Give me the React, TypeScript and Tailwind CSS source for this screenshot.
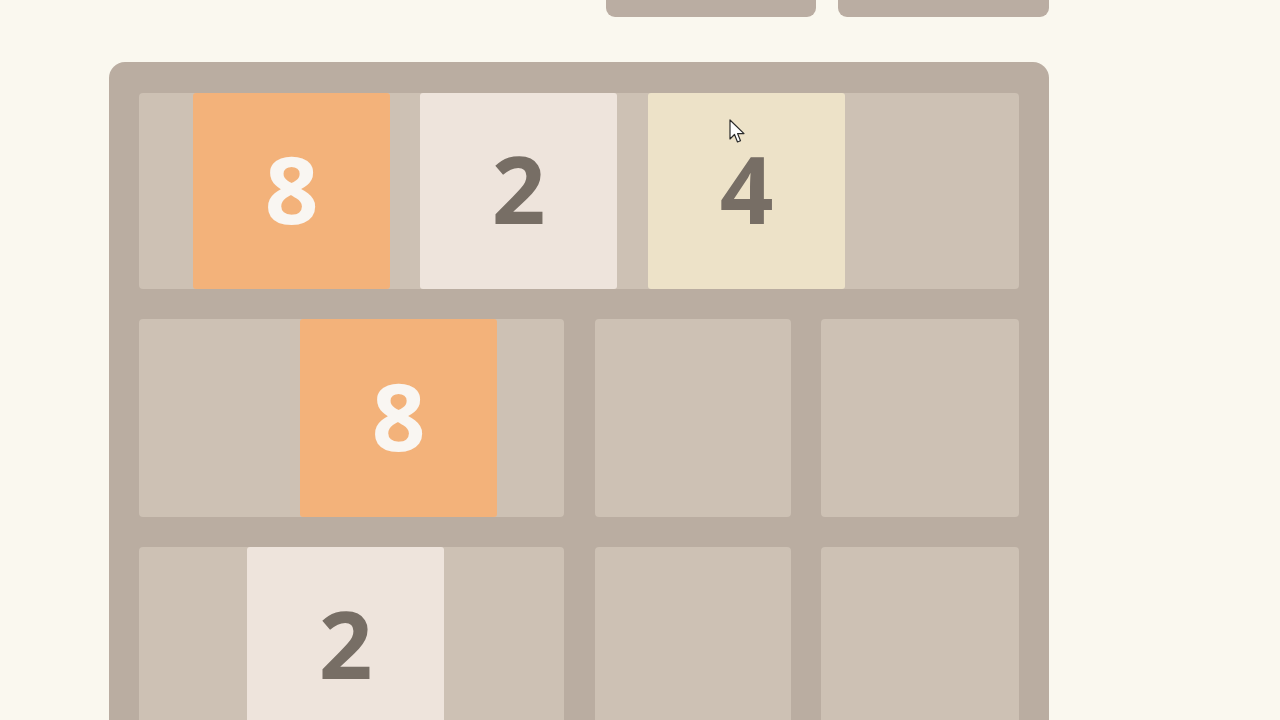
import React from "react";

const font = { fontFamily: '"Open Sans", "Liberation Sans", sans-serif' };

function Tile({ value, cls }: { value: string; cls: string }) {
  return (
    <div
      className={`flex h-full w-[197px] shrink-0 items-center justify-center rounded-[3px] pb-[6px] text-[94px] font-bold leading-none ${cls}`}
      style={font}
    >
      {value}
    </div>
  );
}

function Cell({ w }: { w: string }) {
  return <div className={`h-full shrink-0 rounded-[4px] bg-[#cdc1b4] ${w}`} />;
}

export default function App() {
  return (
    <div className="min-h-[720px] w-full overflow-hidden bg-[#faf8ef]">
      <div className="ml-[109px] w-[940px]">
        <div className="flex justify-end gap-[22px]">
          <div className="h-[17px] w-[210px] rounded-b-[9px] bg-[#baada2]" />
          <div className="h-[17px] w-[211px] rounded-b-[9px] bg-[#baada2]" />
        </div>
        <div className="relative mt-[45px] flex flex-col gap-[30px] rounded-[16px] bg-[#baada1] px-[30px] pb-[30px] pt-[31px]">
          {/* row 1 */}
          <div className="flex h-[196px]">
            <div className="flex h-full w-[880px] gap-[30px] rounded-[4px] bg-[#cdc1b4] pl-[54px]">
              <Tile value="8" cls="bg-[#f3b27a] text-[#f9f6f2]" />
              <Tile value="2" cls="bg-[#eee4dc] text-[#776e65]" />
              <div className="ml-[1px] flex h-full">
                <Tile value="4" cls="bg-[#ede2c8] text-[#776e65]" />
              </div>
            </div>
          </div>
          {/* row 2 */}
          <div className="flex h-[198px]">
            <div className="flex h-full w-[425px] shrink-0 rounded-[4px] bg-[#cdc1b4] pl-[161px]">
              <Tile value="8" cls="bg-[#f3b27a] text-[#f9f6f2]" />
            </div>
            <div className="ml-[31px] flex h-full">
              <Cell w="w-[196px]" />
            </div>
            <div className="ml-[30px] flex h-full">
              <Cell w="w-[198px]" />
            </div>
          </div>
          {/* row 3 */}
          <div className="flex h-[198px]">
            <div className="flex h-full w-[425px] shrink-0 rounded-[4px] bg-[#cdc1b4] pl-[108px]">
              <Tile value="2" cls="bg-[#eee4dc] text-[#776e65]" />
            </div>
            <div className="ml-[31px] flex h-full">
              <Cell w="w-[196px]" />
            </div>
            <div className="ml-[30px] flex h-full">
              <Cell w="w-[198px]" />
            </div>
          </div>
          {/* row 4 */}
          <div className="flex h-[198px] gap-[30px]">
            <Cell w="w-[197px]" />
            <Cell w="w-[197px]" />
            <Cell w="w-[197px]" />
            <Cell w="w-[199px]" />
          </div>
        </div>
      </div>
      {/* mouse cursor */}
      <svg
        className="absolute left-[729px] top-[119px]"
        width="18"
        height="26"
        viewBox="0 0 18 26"
      >
        <path
          d="M1 1 L1 20 L5.5 15.5 L8.5 23 L11.5 21.8 L8.6 14.6 L15 14.6 Z"
          fill="#ffffff"
          stroke="#2a2a2a"
          strokeWidth="1.2"
          strokeLinejoin="round"
        />
      </svg>
    </div>
  );
}
